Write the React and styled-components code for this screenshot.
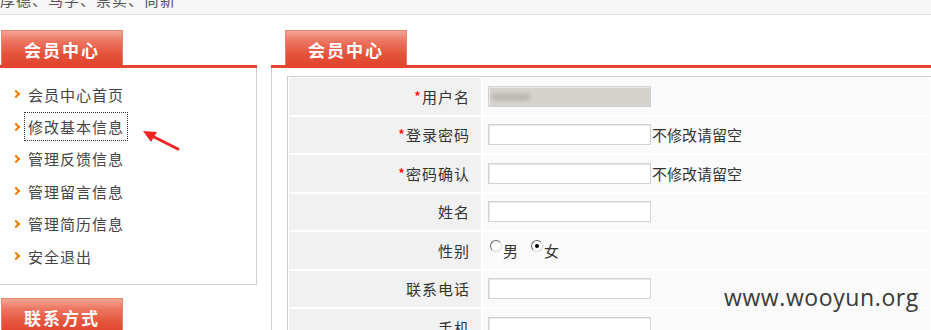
import React from "react";
import styled, { createGlobalStyle } from "styled-components";

const GlobalStyle = createGlobalStyle`
  html, body {
    margin: 0;
    padding: 0;
    background: #fff;
    overflow: hidden;
  }
  body {
    font-family: "Liberation Sans", "Noto Sans CJK SC", sans-serif;
    font-size: 15px;
    color: #333;
  }
`;

const menuItems = [
  "会员中心首页",
  "修改基本信息",
  "管理反馈信息",
  "管理留言信息",
  "管理简历信息",
  "安全退出",
];

const App = () => {
  return (
    <Page>
      <GlobalStyle />
      <TopBar>
        <Motto>厚德、笃学、崇实、尚新</Motto>
      </TopBar>
      <Content>
        <Sidebar>
          <TabRow>
            <Tab>会员中心</Tab>
          </TabRow>
          <MenuBox>
            {menuItems.map((item, i) => (
              <MenuItem key={item}>
                <Chevron />
                <MenuLink focused={i === 1}>{item}</MenuLink>
              </MenuItem>
            ))}
          </MenuBox>
          <SecondTab>
            <Tab>联系方式</Tab>
          </SecondTab>
        </Sidebar>

        <Main>
          <TabRow>
            <Tab>会员中心</Tab>
          </TabRow>
          <FormBox>
            <FormTable>
              <Label>
                <Star>*</Star>用户名
              </Label>
              <Value>
                <Input disabled>
                  <Blur />
                </Input>
              </Value>

              <Label>
                <Star>*</Star>登录密码
              </Label>
              <Value>
                <Input />
                <Hint>不修改请留空</Hint>
              </Value>

              <Label>
                <Star>*</Star>密码确认
              </Label>
              <Value>
                <Input />
                <Hint>不修改请留空</Hint>
              </Value>

              <Label>姓名</Label>
              <Value>
                <Input />
              </Value>

              <Label>性别</Label>
              <Value>
                <Radio />
                <RadioText>男</RadioText>
                <Radio checked />
                <RadioText>女</RadioText>
              </Value>

              <Label>联系电话</Label>
              <Value>
                <Input />
              </Value>

              <Label>手机</Label>
              <Value>
                <Input />
              </Value>
            </FormTable>
          </FormBox>
        </Main>
      </Content>

      <Pointer width="40" height="22" viewBox="0 0 40 22">
        <line x1="36" y1="19" x2="10" y2="6" stroke="#f02424" strokeWidth="3" strokeLinecap="round" />
        <polygon points="1,1 15,2 9,12" fill="#f02424" />
      </Pointer>

      <Watermark>www.wooyun.org</Watermark>
    </Page>
  );
};
export default App;

const Page = styled.div`
  position: relative;
  width: 931px;
  height: 330px;
  overflow: hidden;
`;

const TopBar = styled.div`
  height: 14px;
  background: #f7f7f7;
  border-bottom: 1px solid #dedede;
  overflow: hidden;
`;

const Motto = styled.div`
  margin-top: -9px;
  font-size: 15px;
  letter-spacing: 1px;
  line-height: 18px;
  color: #555;
  font-family: "Noto Sans CJK SC", sans-serif;
`;

const Content = styled.div`
  display: flex;
  gap: 14px;
  padding-top: 13px;
`;

const Sidebar = styled.div`
  width: 257px;
  display: flex;
  flex-direction: column;
`;

const TabRow = styled.div`
  height: 37px;
  border-bottom: 3px solid #e5432b;
  display: flex;
  align-items: flex-end;
`;

const Tab = styled.div`
  width: 122px;
  height: 35px;
  margin-left: 1px;
  border: 1px solid #e48470;
  border-bottom: none;
  background: linear-gradient(#f5a595 0%, #ec7560 30%, #e4513a 70%, #e2452e 100%);
  color: #fff;
  font-family: "Noto Sans CJK SC", sans-serif;
  font-weight: bold;
  font-size: 17px;
  letter-spacing: 2px;
  display: flex;
  align-items: center;
  justify-content: center;
  padding-top: 2px;
  box-sizing: border-box;
`;

const MenuBox = styled.div`
  border-right: 1px solid #cfcfcf;
  border-bottom: 1px solid #cfcfcf;
  padding: 10px 0 12px;
  display: flex;
  flex-direction: column;
`;

const MenuItem = styled.div`
  height: 32.4px;
  display: flex;
  align-items: center;
  padding-left: 13px;
`;

const Chevron = styled.span`
  width: 4px;
  height: 4px;
  border-right: 2px solid #f07c00;
  border-bottom: 2px solid #f07c00;
  transform: rotate(-45deg);
  margin-right: 9px;
`;

const MenuLink = styled.span`
  font-family: "Noto Sans CJK SC", sans-serif;
  font-size: 15px;
  letter-spacing: 1px;
  color: #444;
  line-height: 27px;
  padding: 0 3px;
  margin-left: -4px;
  border: 1px dotted ${(p) => (p.focused ? "#333" : "transparent")};
`;

const SecondTab = styled.div`
  margin-top: 13px;
  display: flex;
`;

const Main = styled.div`
  flex: 1;
  display: flex;
  flex-direction: column;
  & > ${TabRow} {
    padding-left: 13px;
  }
`;

const FormBox = styled.div`
  border-left: 1px solid #cfcfcf;
  padding: 8px 0 0 15px;
`;

const FormTable = styled.div`
  display: grid;
  grid-template-columns: 192px 1fr;
  grid-auto-rows: 36.5px;
  gap: 2px;
  padding: 1px;
  border-top: 1px solid #cccccc;
  border-left: 1px solid #cccccc;
  background: #fff;
`;

const Label = styled.div`
  background: #f1f1f1;
  display: flex;
  align-items: center;
  justify-content: flex-end;
  padding-right: 11px;
  font-family: "Noto Sans CJK SC", sans-serif;
  font-size: 15px;
  letter-spacing: 1px;
  color: #333;
`;

const Star = styled.span`
  color: #f00;
  letter-spacing: 0;
  margin-right: 1px;
`;

const Value = styled.div`
  background: #fafafa;
  display: flex;
  align-items: center;
  padding-left: 5px;
`;

const Input = styled.div`
  position: relative;
  width: 163px;
  height: 21px;
  box-sizing: border-box;
  border: 1px solid #d2d2d2;
  box-shadow: inset 1px 1px 0 #e9e9e9;
  background: ${(p) => (p.disabled ? "#d6d3ce" : "#fff")};
`;

const Blur = styled.span`
  position: absolute;
  left: 3px;
  top: 7px;
  width: 38px;
  height: 6px;
  background: #a8a6a2;
  filter: blur(2px);
  opacity: 0.7;
`;

const Hint = styled.span`
  font-family: "Noto Sans CJK SC", sans-serif;
  font-size: 15px;
  color: #333;
  margin-left: 1px;
`;

const Radio = styled.span`
  width: 10px;
  height: 10px;
  border-radius: 50%;
  border: 1px solid #666;
  border-right-color: #d8d8d8;
  border-bottom-color: #d8d8d8;
  background: #fff;
  margin: 0 1px 0 2px;
  align-self: center;
  transform: translateY(-4px);
  display: flex;
  align-items: center;
  justify-content: center;
  &::after {
    content: "";
    width: 4px;
    height: 4px;
    border-radius: 50%;
    background: ${(p) => (p.checked ? "#000" : "transparent")};
  }
`;

const RadioText = styled.span`
  font-family: "Noto Sans CJK SC", sans-serif;
  font-size: 15px;
  color: #333;
  margin-right: 11px;
`;

const Pointer = styled.svg`
  position: absolute;
  left: 142px;
  top: 130px;
`;

const Watermark = styled.div`
  position: absolute;
  left: 724px;
  top: 281px;
  font-family: "Open Sans", sans-serif;
  font-size: 23px;
  color: #3a3a3a;
  letter-spacing: 0.6px;
`;
